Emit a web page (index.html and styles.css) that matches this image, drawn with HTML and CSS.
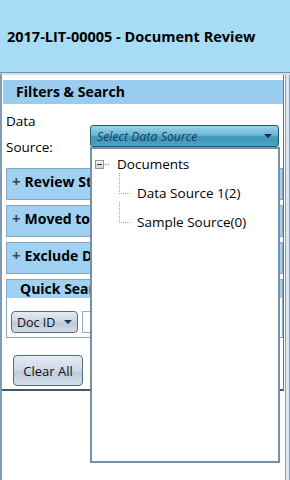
FILE: index.html
```html
<!DOCTYPE html>
<html lang="en">
<head>
    <meta charset="UTF-8">
    <meta name="viewport" content="width=device-width, initial-scale=1.0">
    <title>2017-LIT-00005 - Document Review</title>
    <link rel="stylesheet" href="styles.css">
</head>
<body>
    <!-- Title Bar -->
    <header class="title-bar">
        <h1>2017-LIT-00005 - Document Review</h1>
    </header>

    <div class="workspace">
        <!-- Filters Panel -->
        <section class="filters">
            <div class="filters-head">Filters &amp; Search</div>
            <div class="filters-body">
                <div class="source-row">
                    <label class="source-label">Data<br>Source:</label>
                    <div class="combo">
                        <div class="combo-box">
                            <span>Select Data Source</span>
                            <span class="combo-arrow"></span>
                        </div>
                        <div class="combo-popup">
                            <div class="tree-root">
                                <span class="tree-toggle"></span>
                                <span class="tree-stub"></span>
                                <span>Documents</span>
                            </div>
                            <ul class="tree-children">
                                <li>Data Source 1(2)</li>
                                <li>Sample Source(0)</li>
                            </ul>
                        </div>
                    </div>
                </div>

                <div class="group"><span class="plus">+</span>Review Status</div>
                <div class="group"><span class="plus">+</span>Moved to Folder</div>
                <div class="group"><span class="plus">+</span>Exclude Documents</div>

                <div class="quick">
                    <div class="quick-head">Quick Search</div>
                    <div class="quick-body">
                        <button class="field-btn">Doc ID <span class="small-arrow"></span></button>
                        <input type="text" class="quick-input">
                    </div>
                </div>

                <button class="clear-btn">Clear All</button>
            </div>
        </section>

        <div class="scroll-strip"></div>
    </div>
</body>
</html>
```

FILE: styles.css
```css
body {
    margin: 0;
    padding: 0;
    width: 290px;
    height: 480px;
    overflow: hidden;
    background-color: #fff;
    font-family: "Open Sans", "Noto Sans", sans-serif;
    color: #000;
}
.title-bar {
    height: 72px;
    background-color: #a6dcf6;
    border-bottom: 1px solid #7590a8;
    display: flex;
    align-items: center;
    padding-left: 7px;
}
.title-bar h1 {
    margin: 0;
    font-size: 14.5px;
    font-weight: bold;
}
.workspace {
    display: flex;
    height: 405px;
    border-top: 2px solid #d5dee8;
    border-left: 2px solid #7f9bb5;
}
.filters {
    width: 281px;
    padding-top: 5px;
    align-self: flex-start;
    border-right: 1px solid #5a7892;
    border-bottom: 2px solid #3d5b75;
    padding-bottom: 3px;
}
.filters-head {
    height: 24px;
    line-height: 24px;
    margin-left: 1px;
    padding-left: 13px;
    background-color: #99ccee;
    font-size: 14px;
    font-weight: bold;
}
.filters-body {
    padding: 4px 0 0 4px;
}
.source-row {
    display: flex;
    height: 52px;
}
.source-label {
    width: 84px;
    font-size: 13.5px;
    line-height: 26px;
}
.combo {
    position: relative;
    margin-top: 17px;
    width: 189px;
}
.combo-box {
    height: 20px;
    border: 1px solid #28566e;
    border-radius: 3px;
    background: linear-gradient(#9ad3e8, #6ab9d8 45%, #3e96bb 55%, #4aa2c4);
    display: flex;
    align-items: center;
    justify-content: space-between;
    padding: 0 6px;
    font-size: 12.3px;
    font-style: italic;
    color: #1b3c50;
}
.combo-arrow {
    width: 0;
    height: 0;
    border-left: 4px solid transparent;
    border-right: 4px solid transparent;
    border-top: 4px solid #1e2e38;
}
.combo-popup {
    position: absolute;
    left: 0;
    top: 22px;
    width: 186px;
    height: 312px;
    background-color: #fff;
    border: 2px solid #7391ab;
    font-size: 13.5px;
    z-index: 2;
}
.tree-root {
    display: flex;
    align-items: center;
    height: 26px;
    padding-left: 3px;
    margin-top: 2px;
}
.tree-toggle {
    width: 7px;
    height: 7px;
    border: 1px solid #8a98a6;
    background: linear-gradient(#f4f4f4, #cfd4d9);
    position: relative;
}
.tree-toggle::after {
    content: "";
    position: absolute;
    left: 1px;
    top: 3px;
    width: 5px;
    height: 1px;
    background-color: #333;
}
.tree-stub {
    width: 4px;
    margin: 0 8px 0 1px;
    border-top: 1px dotted #a0a0a0;
}
.tree-children {
    list-style: none;
    margin: 2px 0 0 0;
    padding: 0 0 0 27px;
}
.tree-children li {
    position: relative;
    height: 29px;
    line-height: 29px;
    padding-left: 18px;
}
.tree-children li::before {
    content: "";
    position: absolute;
    left: 0;
    top: -6px;
    height: 20px;
    width: 10px;
    border-left: 1px dotted #a0a0a0;
    border-bottom: 1px dotted #a0a0a0;
}
.group {
    margin-top: 5px;
    padding: 2px 0 0 5px;
    box-sizing: border-box;
    height: 32px;
    background-color: #9fd2f2;
    border: 1px solid #8ca5bb;
    font-size: 14px;
    font-weight: bold;
    white-space: nowrap;
    overflow: hidden;
}
.source-row + .group {
    margin-top: 8px;
}
.plus {
    color: #444;
    font-size: 15px;
    margin-right: 4px;
}
.quick {
    margin-top: 5px;
}
.quick-head {
    height: 18px;
    line-height: 18px;
    padding-left: 13px;
    background-color: #9fd2f2;
    border: 1px solid #8ca5bb;
    border-bottom: none;
    font-size: 14px;
    font-weight: bold;
}
.quick-body {
    display: flex;
    gap: 4px;
    padding: 13px 4px 4px 4px;
    border: 1px solid #8ca5bb;
    border-top: none;
}
.field-btn {
    width: 67px;
    height: 22px;
    padding: 0 0 0 5px;
    display: flex;
    align-items: center;
    justify-content: space-between;
    border: 1px solid #566c84;
    border-radius: 4px;
    background: linear-gradient(#e6ecf4, #c8d4e2 50%, #b9c8d9 55%, #d2dce8);
    font-family: inherit;
    font-size: 12.5px;
    color: #111;
}
.small-arrow {
    margin-right: 5px;
    width: 0;
    height: 0;
    border-left: 4px solid transparent;
    border-right: 4px solid transparent;
    border-top: 4px solid #1e3446;
}
.quick-input {
    flex: 1;
    height: 22px;
    box-sizing: border-box;
    border: 1px solid #9aabb9;
    padding: 0;
}
.clear-btn {
    display: block;
    margin: 17px 0 0 7px;
    width: 70px;
    height: 31px;
    border: 1px solid #566c84;
    border-radius: 4px;
    background: linear-gradient(#e6ecf4, #cdd8e5 50%, #bccadb 55%, #d4dee9);
    font-family: inherit;
    font-size: 13px;
    color: #111;
}
.scroll-strip {
    width: 3px;
    margin-left: auto;
    background-color: #dde5ee;
    border-left: 1px solid #8aa2b8;
    border-right: 1px solid #8aa2b8;
}
```
